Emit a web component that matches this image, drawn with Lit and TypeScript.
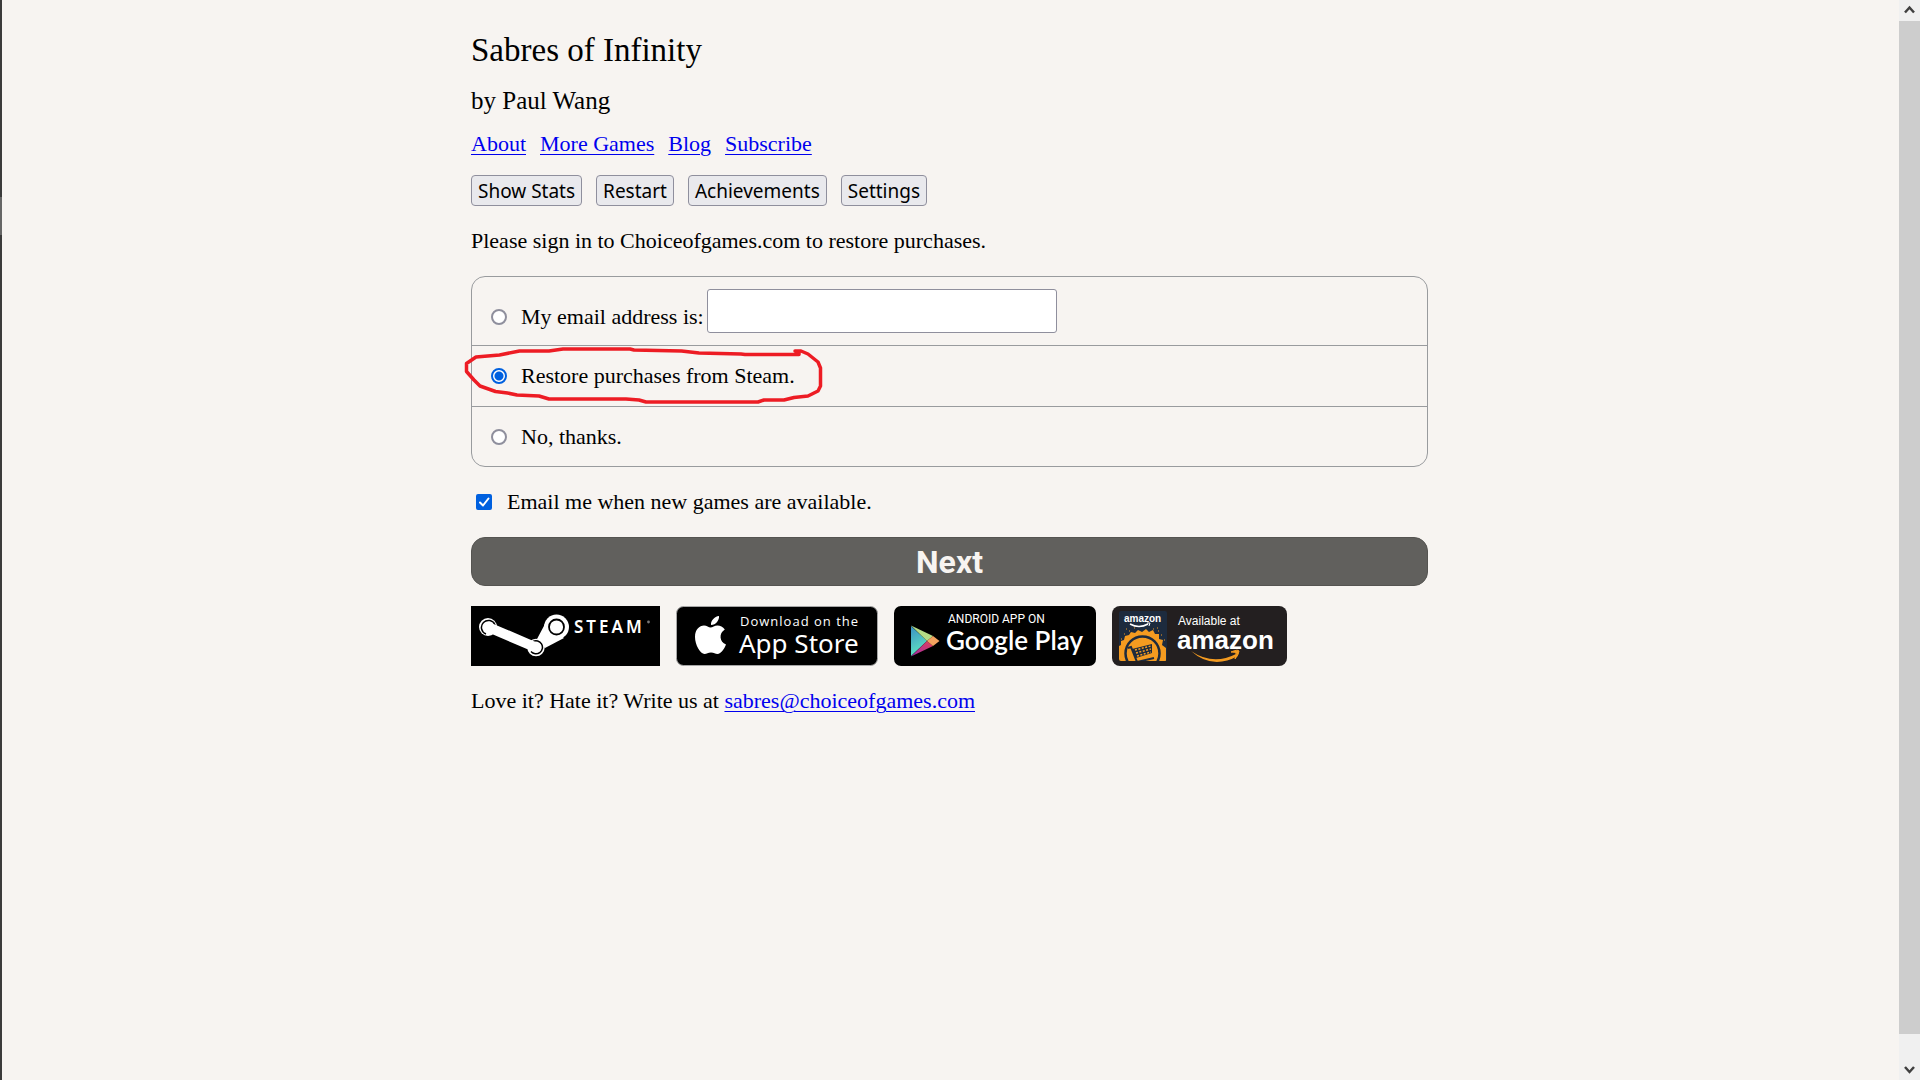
import { LitElement, html, css, svg } from "lit";
import { customElement, state } from "lit/decorators.js";

const LINKS = ["About", "More Games", "Blog", "Subscribe"];
const ACTIONS = ["Show Stats", "Restart", "Achievements", "Settings"];

@customElement("store-badges")
class StoreBadges extends LitElement {
  static styles = css`
    :host {
      display: flex;
      flex-wrap: wrap;
      gap: 16px;
    }
    a {
      display: block;
      height: 60px;
    }
    svg {
      display: block;
    }
    .sans {
      font-family: "Liberation Sans", sans-serif;
      fill: #fff;
    }
    .open {
      font-family: "Open Sans", sans-serif;
      fill: #fff;
    }
    .roboto {
      font-family: Roboto, sans-serif;
      fill: #fff;
    }
    .lato {
      font-family: Lato, sans-serif;
      fill: #fff;
    }
    .noto {
      font-family: "Noto Sans", sans-serif;
      fill: #fff;
    }
    .bold {
      font-weight: 700;
    }
    .semi {
      font-weight: 600;
    }
    .spaced {
      letter-spacing: 1px;
    }
    .wide {
      letter-spacing: 3px;
    }
  `;

  private steam = svg`
    <svg width="189" height="60" viewBox="0 0 189 60" aria-label="Steam">
      <rect width="189" height="60" fill="#000" />
      <circle cx="17" cy="21" r="9" fill="#fff" />
      <circle cx="65" cy="41.500" r="8.700" fill="#fff" />
      <circle cx="85.500" cy="21" r="12.500" fill="#fff" />
      <path d="M74 18 66 33l8 9 19-10z" fill="#fff" />
      <path d="M24 19a7 7 0 1 0-9 9M62 35.500a6.500 6.500 0 1 1-2 10" fill="none" stroke="#000" stroke-width="1.500" />
      <path d="M17 21 65 41.500" stroke="#fff" stroke-width="10" stroke-linecap="round" />
      <circle cx="85.500" cy="21" r="7.500" fill="#fff" stroke="#000" stroke-width="1.800" />
      <text class="noto semi wide" x="103" y="27" font-size="17">STEAM</text>
      <circle cx="177.500" cy="16" r="1.400" fill="#777" />
    </svg>`;

  private apple = svg`
    <svg width="202" height="60" viewBox="0 0 202 60" aria-label="App Store">
      <rect x="0.500" y="0.500" width="201" height="59" rx="7" fill="#000" stroke="#a6a6a6" />
      <path
        d="M43 10c.5 4-3 9-8 9-.6-4 3.500-8.500 8-9zM34.500 21.500c2 0 4-2 7-2 2.700 0 5.500 1.400 7.300 4-6.300 3.800-5.300 12.500 1.200 15-1.500 4-5 9.500-8.500 9.500-2.300 0-3.500-1.500-6.500-1.500s-4.200 1.500-6.500 1.500c-4 0-9.500-9-9.500-17 0-7.500 4.500-11.500 9-11.500 2.800 0 4.700 2 6.500 2z"
        fill="#fff"
      />
      <text class="open spaced" x="64" y="20" font-size="13">Download on the</text>
      <text class="noto" x="63" y="47" font-size="26">App Store</text>
    </svg>`;

  private google = svg`
    <svg width="202" height="60" viewBox="0 0 202 60" aria-label="Google Play">
      <defs>
        <linearGradient id="play-face" x1="0" y1="0" x2="0.300" y2="1">
          <stop offset="0" stop-color="#3a8fc4" />
          <stop offset="1" stop-color="#5fe3c0" />
        </linearGradient>
        <linearGradient id="play-red" x1="1" y1="0" x2="0" y2="1">
          <stop offset="0" stop-color="#e0405a" />
          <stop offset="1" stop-color="#a02aa8" />
        </linearGradient>
      </defs>
      <rect width="202" height="60" rx="7" fill="#000" />
      <path d="M17 20v30l16-15z" fill="url(#play-face)" />
      <path d="M17 19.500 39 30l-6 5z" fill="#b5dc86" />
      <path d="M17 50.500 39 40l-6-5z" fill="url(#play-red)" />
      <path d="M39 30l6.500 5-6.500 5-6-5z" fill="#f4a35f" />
      <text class="roboto" x="54" y="17" font-size="12">ANDROID APP ON</text>
      <text class="lato semi" x="52" y="44" font-size="26">Google Play</text>
    </svg>`;

  private amazon = svg`
    <svg width="175" height="60" viewBox="0 0 175 60" aria-label="Amazon">
      <defs>
        <clipPath id="tile"><rect x="7" y="5" width="48" height="50" rx="2" /></clipPath>
      </defs>
      <rect width="175" height="60" rx="8" fill="#231f20" />
      <g clip-path="url(#tile)">
        <rect x="7" y="5" width="48" height="50" fill="#1d2b3e" />
        <path
          d="M7 55V40l2-1v-4l3-1 1-4 4-1 2-3 4 1 3-3 4 2 4-3 3 3 4-2 2 4 4 0 0 5 4 1-1 5 4 3v13z"
          fill="#f49b20"
        />
        <path
          d="M9 33h1M12 28h1M17 25h1M22 22h1M41 23h1M46 25h1M49 29h1M52 34h1M45 22h1M14 23h1"
          stroke="#f49b20"
        />
        <circle cx="30.500" cy="47.500" r="17" fill="none" stroke="#1d2b3e" stroke-width="2.500" />
        <path d="M16 42l3-1 6 15 17-4" fill="none" stroke="#1d2b3e" stroke-width="2" />
        <path d="M20 43l20-5v9l-16 5z" fill="#1d2b3e" />
        <path
          d="M23 44l16-4M24 47l15-4M25 50l14-4"
          stroke="#f49b20"
          stroke-width="1.500"
          stroke-dasharray="2 1.500"
        />
        <path d="M18 18q9 5 18 0" fill="none" stroke="#fff" stroke-width="1.500" />
        <path d="M35 17h3l-1 3" fill="none" stroke="#fff" />
      </g>
      <text class="sans bold" x="12" y="16" font-size="10">amazon</text>
      <text class="sans" x="66" y="19" font-size="12">Available at</text>
      <text class="sans bold" x="65" y="43" font-size="26">amazon</text>
      <path d="M79 45q22 15 45 3l2 2q-26 14-47-5z" fill="#f49b20" />
      <path d="M119 46q7-3 8-1 0 3-4 8 2-5 1-6-1-1-5-1z" fill="#f49b20" stroke="#f49b20" />
    </svg>`;

  render() {
    return html`
      <a href="#steam">${this.steam}</a>
      <a href="#app-store">${this.apple}</a>
      <a href="#google-play">${this.google}</a>
      <a href="#amazon">${this.amazon}</a>
    `;
  }
}

@customElement("app-root")
class AppRoot extends LitElement {
  static styles = css`
    :host {
      display: grid;
      grid-template-columns: 2px minmax(0, 1fr) 21px;
      min-height: 100vh;
      background: #f7f4f1;
      color: #000;
      font-family: "Liberation Serif", serif;
      font-size: 22px;
      line-height: 24px;
    }
    * {
      box-sizing: border-box;
    }
    .edge {
      background: linear-gradient(#3b3b3b 197px, #666 197px, #666 235px, #3b3b3b 235px);
    }
    .page {
      width: 100%;
      max-width: 959px;
      margin: 0 auto;
      padding: 30px 2px 30px 0;
    }
    h1,
    h2,
    p {
      margin: 0;
      font-weight: 400;
    }
    h1 {
      font-size: 33px;
      line-height: 40px;
    }
    h2 {
      margin-top: 16px;
      font-size: 25px;
      line-height: 30px;
    }
    a {
      color: #0000ee;
      text-decoration-thickness: 1px;
      text-underline-offset: 3px;
    }
    .links,
    .actions {
      display: flex;
      flex-wrap: wrap;
    }
    .links {
      gap: 14px;
      margin-top: 16px;
    }
    .actions {
      gap: 14px;
      margin-top: 19px;
    }
    .actions button {
      height: 31px;
      padding: 2px 6px 0;
      border: 1px solid #8f8f9d;
      border-radius: 4px;
      background: #e9e9ed;
      color: #000;
      font-family: "Noto Sans", sans-serif;
      font-size: 19px;
      line-height: 27px;
    }
    .intro {
      margin-top: 23px;
    }
    .choices {
      margin: 23px 0 0;
      padding: 0;
      border: 1px solid #999b9e;
      border-radius: 14px;
    }
    .choice {
      position: relative;
      display: flex;
      align-items: center;
      min-height: 61px;
      padding: 0 19px;
    }
    .choice + .choice {
      border-top: 1px solid #999b9e;
    }
    .choice:last-child {
      min-height: 60px;
    }
    .choice.email {
      min-height: 68px;
      align-items: flex-end;
      padding-bottom: 12px;
    }
    .email .option {
      padding-bottom: 4px;
    }
    .option {
      display: flex;
      align-items: center;
    }
    input[type="radio"],
    input[type="checkbox"] {
      appearance: none;
      flex: none;
      width: 16px;
      height: 16px;
      margin: 0 14px 0 0;
      background: #fff;
      border: 2px solid #8f8f9d;
    }
    input[type="radio"] {
      border-radius: 50%;
    }
    input[type="radio"]:checked {
      border-color: #0060df;
      background: radial-gradient(circle, #0060df 4px, #fff 5px);
    }
    input[type="checkbox"] {
      display: block;
      margin: 0;
      border-radius: 2px;
    }
    input[type="checkbox"]:checked {
      border-color: #0060df;
      background: #0060df;
    }
    .tick {
      position: absolute;
      inset: 0;
      pointer-events: none;
    }
    .box {
      position: relative;
      width: 16px;
      height: 16px;
    }
    .address {
      width: 350px;
      height: 44px;
      margin-left: 3px;
      padding: 0 8px;
      border: 1px solid #8f8f9d;
      border-radius: 3px;
      background: #fff;
      font: inherit;
    }
    .circle {
      position: absolute;
      z-index: 1;
      left: -12px;
      top: -6px;
      pointer-events: none;
    }
    .notify {
      display: flex;
      align-items: center;
      gap: 15px;
      margin-top: 23px;
      padding-left: 5px;
    }
    .next {
      display: block;
      width: 100%;
      height: 49px;
      margin: 23px 0 20px;
      border: 1px solid #555451;
      border-radius: 14px;
      background: #61605d;
      color: #f7f4f1;
      font-family: Roboto, sans-serif;
      font-size: 32px;
      font-weight: 700;
      line-height: 40px;
    }
    .contact {
      margin-top: 23px;
    }
    .scrollbar {
      display: flex;
      flex-direction: column;
      background: #f0f0f0;
    }
    .thumb {
      flex: 1;
      margin-bottom: 25px;
      background: #cdcdcd;
    }
    .scrollbar svg {
      display: block;
    }
  `;

  @state() private choice = "steam";

  private radio(value: string, text: string) {
    return html`
      <label class="option">
        <input
          type="radio"
          name="restore"
          .value=${value}
          .checked=${this.choice === value}
          @change=${() => (this.choice = value)}
        />${text}
      </label>
    `;
  }

  render() {
    return html`
      <div class="edge"></div>
      <main class="page">
        <h1>Sabres of Infinity</h1>
        <h2>by Paul Wang</h2>
        <nav class="links">${LINKS.map((t) => html`<a href="#">${t}</a>`)}</nav>
        <div class="actions">${ACTIONS.map((t) => html`<button type="button">${t}</button>`)}</div>
        <p class="intro">Please sign in to Choiceofgames.com to restore purchases.</p>
        <form @submit=${(e: Event) => e.preventDefault()}>
          <fieldset class="choices">
            <div class="choice email">
              ${this.radio("email", "My email address is:")}
              <input class="address" type="email" aria-label="My email address" />
            </div>
            <div class="choice">
              ${this.radio("steam", "Restore purchases from Steam.")}
              <svg class="circle" width="370" height="68" viewBox="0 0 370 68" fill="none" stroke="#ed1c24" stroke-width="3.500" stroke-linejoin="round" stroke-linecap="round">
                <path
                  d="M335 11h6l7 3 10 8 2.500 6v18l-2.500 5-10 5-14 1.500-10 2.500h-20l-6 2H186l-7-2-13-1H89l-10-3-22-1-9.500-2-12-1.500L20 46l-6-6-7.500-8.500v-8L16 17l23.500-2 20-4H89l14-2h67l4 1 47.500 1 17.500 2 42 1 4 .5h54V12"
                />
              </svg>
            </div>
            <div class="choice">${this.radio("none", "No, thanks.")}</div>
          </fieldset>
          <div class="notify">
            <span class="box">
              <input id="notify" type="checkbox" checked />
              <svg class="tick" width="16" height="16" viewBox="0 0 16 16">
                <path d="M4 8.500 7 11.500 12.500 4.500" fill="none" stroke="#fff" stroke-width="2" stroke-linecap="round" stroke-linejoin="round" />
              </svg>
            </span>
            <label for="notify">Email me when new games are available.</label>
          </div>
          <button class="next" type="submit">Next</button>
        </form>
        <store-badges></store-badges>
        <p class="contact">
          Love it? Hate it? Write us at
          <a href="mailto:sabres@choiceofgames.com">sabres@choiceofgames.com</a>
        </p>
      </main>
      <div class="scrollbar" aria-hidden="true">
        <svg width="21" height="21" viewBox="0 0 21 21">
          <path d="M6 12.500 10.500 7.500 15 12.500" fill="none" stroke="#404040" stroke-width="2.500" />
        </svg>
        <div class="thumb"></div>
        <svg width="21" height="21" viewBox="0 0 21 21">
          <path d="M6 8 10.500 13 15 8" fill="none" stroke="#404040" stroke-width="2.500" />
        </svg>
      </div>
    `;
  }
}
